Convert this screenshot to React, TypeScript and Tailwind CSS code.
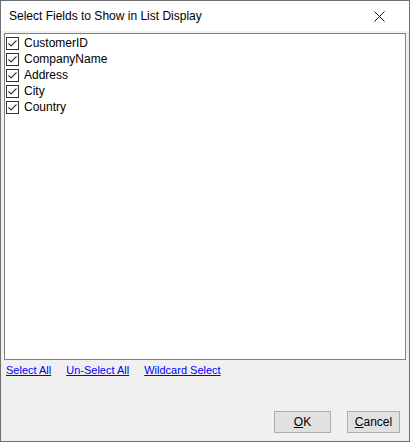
import React from 'react';

const fields = ['CustomerID', 'CompanyName', 'Address', 'City', 'Country'];

function CheckBox() {
  return (
    <svg width="13" height="13" viewBox="0 0 13 13" className="shrink-0">
      <rect x="0.5" y="0.5" width="12" height="12" fill="#fff" stroke="#333" />
      <path d="M2.5 6.5 L5 9 L10.5 3.5" fill="none" stroke="#333" strokeWidth="1.1" />
    </svg>
  );
}

export default function App() {
  return (
    <div
      className="w-[410px] h-[442px] border border-[#6f6f6f] bg-[#f0f0f0] flex flex-col text-[12px] text-black"
      style={{ fontFamily: '"Segoe UI", "Liberation Sans", Arial, sans-serif' }}
    >
      <div className="h-[30px] bg-white flex items-center justify-between pl-2 pr-[24px] shrink-0">
        <span className="text-[12px] leading-none">Select Fields to Show in List Display</span>
        <svg width="11" height="11" viewBox="0 0 11 11">
          <path d="M0.5 0.5 L10.5 10.5 M10.5 0.5 L0.5 10.5" stroke="#111" strokeWidth="1" />
        </svg>
      </div>

      <div className="mt-[2px] ml-[3px] w-[402px] h-[327px] bg-white border border-[#828282] pt-[1px] pl-[1px]">
        {fields.map((f) => (
          <div key={f} className="h-4 flex items-center gap-[5px]">
            <CheckBox />
            <span className="leading-none">{f}</span>
          </div>
        ))}
      </div>

      <div className="flex items-center gap-[15px] pl-[5px] mt-[2px] h-4 text-[11px]">
        <span className="text-[#0000ff] underline">Select All</span>
        <span className="text-[#0000ff] underline">Un-Select All</span>
        <span className="text-[#0000ff] underline">Wildcard Select</span>
      </div>

      <div className="flex-1" />

      <div className="flex justify-end gap-[16px] pr-[9px] pb-[8px]">
        <button className="w-[57px] h-[22px] bg-[#e1e1e1] border border-[#adadad] leading-none">
          <span className="underline">O</span>K
        </button>
        <button className="w-[53px] h-[22px] bg-[#e1e1e1] border border-[#adadad] leading-none">
          <span className="underline">C</span>ancel
        </button>
      </div>
    </div>
  );
}
